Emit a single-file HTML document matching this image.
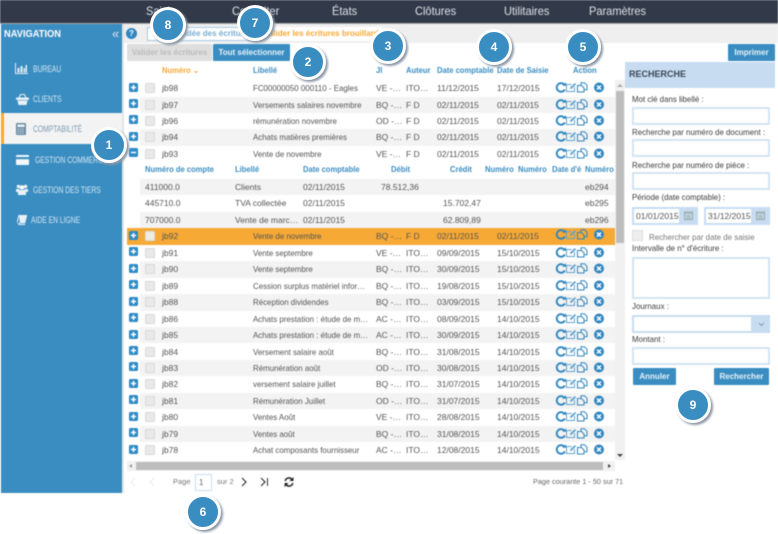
<!DOCTYPE html>
<html lang="fr"><head><meta charset="utf-8"><title>Comptabilité</title>
<style>
*{box-sizing:border-box}
html,body{margin:0;padding:0;background:#fff}
body{width:778px;height:534px;position:relative;overflow:hidden;font-family:"Liberation Sans",sans-serif;font-size:8.5px;color:#555}
.a,.r span,.r svg,.c{position:absolute;white-space:nowrap}
#w{position:absolute;left:0;top:0;width:778px;height:534px;filter:blur(.4px)}
.n{top:4px;color:#dfe3e8;font-size:12px;line-height:14px;transform:scaleX(.92);transform-origin:0 50%}
.s{color:#d3e6f3;font-size:9px;line-height:11px;transform:scaleX(.75);transform-origin:0 50%}
.r{position:absolute;left:127px;width:488px;height:16.45px;line-height:16px}
.g::before{content:"";position:absolute;left:13px;right:0;top:0;bottom:0;background:#f3f3f3}
.o{background:#f6a935;color:#555}
.r span{top:0}
.i{left:35px}.l{left:126px;transform:scaleX(.93);transform-origin:0 50%}.j{left:249px}.u{left:279px}.d{left:310px}.e{left:370px}
.cb{left:18px;top:3px!important;width:10px;height:10px;background:#e9e9e9;border:1px solid #d9d9d9;border-radius:1px}
.o .cb{background:#f0ede6}
.h{position:absolute;line-height:12px;color:#3a8dc1;font-weight:bold;font-size:8px;transform:scaleX(.95);transform-origin:0 50%}
.b{position:absolute;height:17px;line-height:17px;text-align:center;background:#3a8dc1;color:#e8f2f8;border-radius:1px;font-size:8px;font-weight:bold}
.lb{position:absolute;left:632px;font-size:8.5px;line-height:11px;color:#3d3d3d;transform:scaleX(.93);transform-origin:0 50%}
.in{position:absolute;background:#fff;border:2px solid #d3e4f4;height:18px}
.c{width:36px;height:36px;border-radius:50%;background:#3a8dc1;border:3px solid #fff;box-shadow:2px 2px 2px #8c98a6;color:#fff;font-weight:bold;font-size:12px;line-height:30px;text-align:center;z-index:5}
.m{transform:translate(-18px,-18px)}
.f{font-size:7.5px;line-height:12px;color:#777}
</style></head><body>
<svg width="0" height="0" style="position:absolute"><defs>
<symbol id="pl" viewBox="0 0 9 9"><rect width="9" height="9" rx="1.5" fill="#2f8ac6"/><path d="M2 4.5h5M4.5 2v5" stroke="#fff" stroke-width="1.5"/></symbol>
<symbol id="mi" viewBox="0 0 9 9"><rect width="9" height="9" rx="1.5" fill="#2f8ac6"/><path d="M2 4.5h5" stroke="#fff" stroke-width="1.5"/></symbol>
<symbol id="ac" viewBox="0 0 52 11"><g fill="none" stroke="#2f86c0"><path d="M9.500 2.900A4.300 4.300 0 1 0 9.800 7.500" stroke-width="1.900"/><path d="M7.200 3.800h3.800V.2z" fill="#2f86c0" stroke="none"/><path d="M19.500 5v4.500h-8V2.500H16.500" stroke-width="1" stroke="#5fa3d1"/><path d="M15 7l.3-1.800L19.800 1l1.300 1.300-4.500 4.500z" fill="#5fa3d1" stroke="none"/><path d="M22.500 3.500h4l2.500 2.500v4h-6.500z" stroke-width="1"/><path d="M26 3V.8h3.500l2.500 2.500v4.500h-3" stroke-width="1"/></g><circle cx="44" cy="5.500" r="5" fill="#2f86c0"/><path d="M42 3.500l4 4M46 3.500l-4 4" stroke="#fff" stroke-width="1.500"/></symbol>
</defs></svg>
<div id="w">
<div class="a" style="left:0;top:0;width:778px;height:23px;background:#323a49"></div>
<div class="a" style="left:0;top:23px;width:778px;height:1px;background:#aaa"></div>
<div class="a n" style="left:146px">Saisie</div>
<div class="a n" style="left:232px">Consulter</div>
<div class="a n" style="left:332px">États</div>
<div class="a n" style="left:415px">Clôtures</div>
<div class="a n" style="left:504px">Utilitaires</div>
<div class="a n" style="left:589px">Paramètres</div>

<div class="a" style="left:1px;top:24px;width:121px;height:469px;background:#3a8dc1"></div>
<div class="a" style="left:122px;top:24px;width:2px;height:469px;background:#e4e4e4"></div>
<div class="a" style="left:4px;top:28px;color:#fff;font-weight:bold;font-size:10px;line-height:13px;transform:scaleX(.93);transform-origin:0 50%">NAVIGATION</div>
<div class="a" style="left:112px;top:27px;color:#dbe9f3;font-size:13px;line-height:13px">«</div>
<svg class="a" style="left:15px;top:63px" width="13" height="11" viewBox="0 0 13 11"><path d="M.5 0v10.500H13" fill="none" stroke="#e3eef6"/><path d="M2.500 5h2v4.500h-2zM5.500 3h2v6.500h-2zM8.500 5h1.500v4.500H8.500zM10.500 2H12v7.500h-1.500z" fill="#e3eef6"/></svg>
<div class="a s" style="left:33px;top:64px">BUREAU</div>
<svg class="a" style="left:16px;top:93px" width="13" height="12" viewBox="0 0 13 12"><path d="M3 5l1.500-3.500h4L10 5" fill="none" stroke="#e8f1f7"/><rect x="0" y="4.500" width="13" height="2.500" rx="1" fill="#e8f1f7"/><path d="M1.500 7.500h10L10.500 12h-8z" fill="#e8f1f7"/></svg>
<div class="a s" style="left:33px;top:94px">CLIENTS</div>
<div class="a" style="left:1px;top:113px;width:121px;height:31px;background:#f3f3f3"></div>
<div class="a" style="left:1px;top:113px;width:3px;height:31px;background:#f6a935"></div>
<svg class="a" style="left:16px;top:123px" width="10" height="12" viewBox="0 0 10 12"><rect width="10" height="12" rx="1" fill="#6d8ea6"/><rect x="1.500" y="1.500" width="7" height="2.500" fill="#f3f3f3"/><path d="M1.500 6h7M1.500 8h7M1.500 10h7" stroke="#f3f3f3" stroke-width=".8" stroke-dasharray="1.500 .8"/></svg>
<div class="a s" style="left:33px;top:124px;color:#7c9cb2">COMPTABILITÉ</div>
<svg class="a" style="left:16px;top:155px" width="13" height="10" viewBox="0 0 13 10"><rect width="13" height="10" rx="1" fill="#f3f7fa"/><rect y="2" width="13" height="2.200" fill="#3a8dc1"/></svg>
<div class="a s" style="left:35px;top:155px">GESTION COMMERCE</div>
<svg class="a" style="left:16px;top:184px" width="12" height="11" viewBox="0 0 12 11"><circle cx="2.500" cy="2.500" r="1.800" fill="#e8f1f7"/><circle cx="9.500" cy="2.500" r="1.800" fill="#e8f1f7"/><circle cx="6" cy="3.500" r="2.200" fill="#fff"/><path d="M0 5h3l1 1h4l1-1h3v3H10v3H2V8H0z" fill="#e8f1f7"/></svg>
<div class="a s" style="left:33px;top:185px">GESTION DES TIERS</div>
<svg class="a" style="left:17px;top:215px" width="10" height="10" viewBox="0 0 10 10"><path d="M2 0h8L8 8H2.500C1 8 1 10 2.500 10H8v-.8H3C2 9.200 2 8.800 3 8.800" fill="#e8f1f7" stroke="#e8f1f7" stroke-width=".5"/><path d="M0 8L2 0" stroke="#e8f1f7"/></svg>
<div class="a s" style="left:31px;top:215px">AIDE EN LIGNE</div>

<div class="a" style="left:124px;top:24px;width:654px;height:19px;background:#efefef"></div>
<div class="a" style="left:126px;top:27.500px;width:11px;height:11px;border-radius:50%;background:#2f86c0;color:#fff;font-size:8px;font-weight:bold;line-height:11px;text-align:center">?</div>
<div class="a" style="left:147px;top:27px;width:112px;height:14px;background:#fff;border:1px solid #a8cde6;color:#79aed2;line-height:12px;padding-left:25px;font-weight:bold;font-size:8px">Validée des écritures</div>
<div class="a" style="left:258px;top:27px;width:124px;height:14px;background:#fff;color:#f6a935;line-height:13px;font-weight:bold;font-size:8px;padding-left:6px">Valider les écritures brouillard</div>
<div class="b" style="left:127px;top:44px;width:85px;background:#dedede;color:#bcbcbc">Valider les écritures</div>
<div class="b" style="left:213px;top:44px;width:77px">Tout sélectionner</div>
<div class="b" style="left:728px;top:44px;width:47px">Imprimer</div>

<div class="h" style="left:162px;top:65px;color:#f6a935">Numéro ⌄</div>
<div class="h" style="left:253px;top:65px">Libellé</div>
<div class="h" style="left:376px;top:65px">Jl</div>
<div class="h" style="left:406px;top:65px">Auteur</div>
<div class="h" style="left:437px;top:65px">Date comptable</div>
<div class="h" style="left:497px;top:65px">Date de Saisie</div>
<div class="h" style="left:573px;top:65px">Action</div>

<div class="r" style="top:80px"><svg style="left:2px;top:2.500px" width="9" height="9"><use href="#pl"/></svg><span class="cb"></span><span class="i">jb98</span><span class="l">FC00000050 000110 - Eagles</span><span class="j">VE -…</span><span class="u">ITO…</span><span class="d">11/12/2015</span><span class="e">17/12/2015</span><svg style="left:428px;top:2px" width="52" height="11"><use href="#ac"/></svg></div>
<div class="r g" style="top:96.500px"><svg style="left:2px;top:2.500px" width="9" height="9"><use href="#pl"/></svg><span class="cb"></span><span class="i">jb97</span><span class="l">Versements salaires novembre</span><span class="j">BQ -…</span><span class="u">F D</span><span class="d">02/11/2015</span><span class="e">02/11/2015</span><svg style="left:428px;top:2px" width="52" height="11"><use href="#ac"/></svg></div>
<div class="r" style="top:112.900px"><svg style="left:2px;top:2.500px" width="9" height="9"><use href="#pl"/></svg><span class="cb"></span><span class="i">jb96</span><span class="l">rémunération novembre</span><span class="j">OD -…</span><span class="u">F D</span><span class="d">02/11/2015</span><span class="e">02/11/2015</span><svg style="left:428px;top:2px" width="52" height="11"><use href="#ac"/></svg></div>
<div class="r g" style="top:129.400px"><svg style="left:2px;top:2.500px" width="9" height="9"><use href="#pl"/></svg><span class="cb"></span><span class="i">jb94</span><span class="l">Achats matières premières</span><span class="j">BQ -…</span><span class="u">F D</span><span class="d">02/11/2015</span><span class="e">02/11/2015</span><svg style="left:428px;top:2px" width="52" height="11"><use href="#ac"/></svg></div>
<div class="r" style="top:145.800px"><svg style="left:2px;top:2.500px" width="9" height="9"><use href="#mi"/></svg><span class="cb"></span><span class="i">jb93</span><span class="l">Vente de novembre</span><span class="j">VE -…</span><span class="u">F D</span><span class="d">02/11/2015</span><span class="e">02/11/2015</span><svg style="left:428px;top:2px" width="52" height="11"><use href="#ac"/></svg></div>

<div class="h" style="left:145px;top:164px">Numéro de compte</div>
<div class="h" style="left:235px;top:164px">Libellé</div>
<div class="h" style="left:303px;top:164px">Date comptable</div>
<div class="h" style="left:391px;top:164px">Débit</div>
<div class="h" style="left:450px;top:164px">Crédit</div>
<div class="h" style="left:485px;top:164px">Numéro</div>
<div class="h" style="left:518px;top:164px">Numéro</div>
<div class="h" style="left:552px;top:164px">Date d'é</div>
<div class="h" style="left:585px;top:164px">Numéro</div>

<div class="r g" style="top:179px"><span style="left:18px">411000.0</span><span style="left:108px">Clients</span><span style="left:176px">02/11/2015</span><span style="left:254px">78.512,36</span><span style="left:458px">eb294</span></div>
<div class="r" style="top:195.400px"><span style="left:18px">445710.0</span><span style="left:108px">TVA collectée</span><span style="left:176px">02/11/2015</span><span style="left:316px">15.702,47</span><span style="left:458px">eb295</span></div>
<div class="r g" style="top:211.900px"><span style="left:18px">707000.0</span><span style="left:108px">Vente de marc…</span><span style="left:176px">02/11/2015</span><span style="left:316px">62.809,89</span><span style="left:458px">eb296</span></div>

<div class="r o" style="top:228.300px"><svg style="left:2px;top:2.500px" width="9" height="9"><use href="#pl"/></svg><span class="cb"></span><span class="i">jb92</span><span class="l">Vente de novembre</span><span class="j">BQ -…</span><span class="u">F D</span><span class="d">02/11/2015</span><span class="e">02/11/2015</span><svg style="left:428px;top:1px" width="52" height="11"><use href="#ac"/></svg></div>
<div class="r" style="top:244.800px"><svg style="left:2px;top:2.500px" width="9" height="9"><use href="#pl"/></svg><span class="cb"></span><span class="i">jb91</span><span class="l">Vente septembre</span><span class="j">VE -…</span><span class="u">ITO…</span><span class="d">09/09/2015</span><span class="e">15/10/2015</span><svg style="left:428px;top:2px" width="52" height="11"><use href="#ac"/></svg></div>
<div class="r g" style="top:261.200px"><svg style="left:2px;top:2.500px" width="9" height="9"><use href="#pl"/></svg><span class="cb"></span><span class="i">jb90</span><span class="l">Vente septembre</span><span class="j">BQ -…</span><span class="u">ITO…</span><span class="d">30/09/2015</span><span class="e">15/10/2015</span><svg style="left:428px;top:2px" width="52" height="11"><use href="#ac"/></svg></div>
<div class="r" style="top:277.700px"><svg style="left:2px;top:2.500px" width="9" height="9"><use href="#pl"/></svg><span class="cb"></span><span class="i">jb89</span><span class="l">Cession surplus matériel infor…</span><span class="j">BQ -…</span><span class="u">ITO…</span><span class="d">19/08/2015</span><span class="e">15/10/2015</span><svg style="left:428px;top:2px" width="52" height="11"><use href="#ac"/></svg></div>
<div class="r g" style="top:294.100px"><svg style="left:2px;top:2.500px" width="9" height="9"><use href="#pl"/></svg><span class="cb"></span><span class="i">jb88</span><span class="l">Réception dividendes</span><span class="j">BQ -…</span><span class="u">ITO…</span><span class="d">03/09/2015</span><span class="e">15/10/2015</span><svg style="left:428px;top:2px" width="52" height="11"><use href="#ac"/></svg></div>
<div class="r" style="top:310.600px"><svg style="left:2px;top:2.500px" width="9" height="9"><use href="#pl"/></svg><span class="cb"></span><span class="i">jb86</span><span class="l">Achats prestation : étude de m…</span><span class="j">AC -…</span><span class="u">ITO…</span><span class="d">08/09/2015</span><span class="e">14/10/2015</span><svg style="left:428px;top:2px" width="52" height="11"><use href="#ac"/></svg></div>
<div class="r g" style="top:327px"><svg style="left:2px;top:2.500px" width="9" height="9"><use href="#pl"/></svg><span class="cb"></span><span class="i">jb85</span><span class="l">Achats prestation : étude de m…</span><span class="j">AC -…</span><span class="u">ITO…</span><span class="d">30/09/2015</span><span class="e">14/10/2015</span><svg style="left:428px;top:2px" width="52" height="11"><use href="#ac"/></svg></div>
<div class="r" style="top:343.500px"><svg style="left:2px;top:2.500px" width="9" height="9"><use href="#pl"/></svg><span class="cb"></span><span class="i">jb84</span><span class="l">Versement salaire août</span><span class="j">BQ -…</span><span class="u">ITO…</span><span class="d">31/08/2015</span><span class="e">14/10/2015</span><svg style="left:428px;top:2px" width="52" height="11"><use href="#ac"/></svg></div>
<div class="r g" style="top:359.900px"><svg style="left:2px;top:2.500px" width="9" height="9"><use href="#pl"/></svg><span class="cb"></span><span class="i">jb83</span><span class="l">Rémunération août</span><span class="j">OD -…</span><span class="u">ITO…</span><span class="d">30/08/2015</span><span class="e">14/10/2015</span><svg style="left:428px;top:2px" width="52" height="11"><use href="#ac"/></svg></div>
<div class="r" style="top:376.400px"><svg style="left:2px;top:2.500px" width="9" height="9"><use href="#pl"/></svg><span class="cb"></span><span class="i">jb82</span><span class="l">versement salaire juillet</span><span class="j">BQ -…</span><span class="u">ITO…</span><span class="d">31/07/2015</span><span class="e">14/10/2015</span><svg style="left:428px;top:2px" width="52" height="11"><use href="#ac"/></svg></div>
<div class="r g" style="top:392.800px"><svg style="left:2px;top:2.500px" width="9" height="9"><use href="#pl"/></svg><span class="cb"></span><span class="i">jb81</span><span class="l">Rémunération Juillet</span><span class="j">OD -…</span><span class="u">ITO…</span><span class="d">31/07/2015</span><span class="e">14/10/2015</span><svg style="left:428px;top:2px" width="52" height="11"><use href="#ac"/></svg></div>
<div class="r" style="top:409.300px"><svg style="left:2px;top:2.500px" width="9" height="9"><use href="#pl"/></svg><span class="cb"></span><span class="i">jb80</span><span class="l">Ventes Août</span><span class="j">VE -…</span><span class="u">ITO…</span><span class="d">28/08/2015</span><span class="e">14/10/2015</span><svg style="left:428px;top:2px" width="52" height="11"><use href="#ac"/></svg></div>
<div class="r g" style="top:425.700px"><svg style="left:2px;top:2.500px" width="9" height="9"><use href="#pl"/></svg><span class="cb"></span><span class="i">jb79</span><span class="l">Ventes août</span><span class="j">BQ -…</span><span class="u">ITO…</span><span class="d">31/08/2015</span><span class="e">14/10/2015</span><svg style="left:428px;top:2px" width="52" height="11"><use href="#ac"/></svg></div>
<div class="r" style="top:442.200px"><svg style="left:2px;top:2.500px" width="9" height="9"><use href="#pl"/></svg><span class="cb"></span><span class="i">jb78</span><span class="l">Achat composants fournisseur</span><span class="j">AC -…</span><span class="u">ITO…</span><span class="d">12/08/2015</span><span class="e">14/10/2015</span><svg style="left:428px;top:2px" width="52" height="11"><use href="#ac"/></svg></div>

<div class="a" style="left:615px;top:80px;width:10px;height:380px;background:#f1f1f1"></div>
<div class="a" style="left:616px;top:91px;width:8px;height:152px;background:#bdbdbd"></div>
<div class="a" style="left:617px;top:84px;border:3px solid transparent;border-bottom:3px solid #aaa;border-top:0"></div>
<div class="a" style="left:617px;top:454px;border:3px solid transparent;border-top:3px solid #444;border-bottom:0"></div>
<div class="a" style="left:127px;top:461px;width:488px;height:10px;background:#f1f1f1"></div>
<div class="a" style="left:136px;top:462px;width:467px;height:8px;background:#bdbdbd"></div>
<div class="a" style="left:129px;top:464px;border:2.500px solid transparent;border-right:3px solid #999;border-left:0"></div>
<div class="a" style="left:608px;top:464px;border:2.500px solid transparent;border-left:3px solid #444;border-right:0"></div>

<div class="a f" style="left:173px;top:476px">Page</div>
<div class="a" style="left:195px;top:474px;width:17px;height:17px;border:1px solid #c7dcf0;background:#fff;font-size:8px;line-height:15px;padding-left:3px;color:#666">1</div>
<div class="a f" style="left:217px;top:476px">sur 2</div>
<svg class="a" style="left:130px;top:477px" width="30" height="10" viewBox="0 0 30 10"><path d="M5 1L1 5l4 4M24 1l-4 4 4 4" fill="none" stroke="#eee" stroke-width="1.200"/></svg>
<svg class="a" style="left:240px;top:477px" width="30" height="10" viewBox="0 0 30 10"><path d="M2 1l4 4-4 4M21 1l4 4-4 4" fill="none" stroke="#333" stroke-width="1.200"/><path d="M27.500 1v8" stroke="#333"/></svg>
<svg class="a" style="left:284px;top:477px" width="10" height="10" viewBox="0 0 10 10"><path d="M1.200 4A3.800 3.800 0 0 1 8 2.500M8.800 6A3.800 3.800 0 0 1 2 7.500" fill="none" stroke="#222" stroke-width="1.500"/><path d="M9.500 0v4h-4zM.500 10V6h4z" fill="#222"/></svg>
<div class="a f" style="left:533px;top:476px;color:#666;transform:scaleX(.97);transform-origin:0 50%">Page courante 1 - 50 sur 71</div>

<div class="a" style="left:625px;top:62px;width:150px;height:26px;background:#c7dcf0;color:#3a4656;font-weight:bold;font-size:9px;line-height:25px;padding-left:4px">RECHERCHE</div>
<div class="lb" style="top:94px">Mot clé dans libellé :</div><div class="in" style="left:632px;top:107px;width:138px"></div>
<div class="lb" style="top:127px">Recherche par numéro de document :</div><div class="in" style="left:632px;top:139px;width:138px"></div>
<div class="lb" style="top:160px">Recherche par numéro de pièce :</div><div class="in" style="left:632px;top:172px;width:138px"></div>
<div class="lb" style="top:192px">Période (date comptable) :</div>
<div class="in" style="left:632px;top:207px;width:66px;padding-left:2px;line-height:15px;color:#555;border-width:2px 19px 2px 2px;border-color:#c7dcf0">01/01/2015</div>
<div class="in" style="left:704px;top:207px;width:66px;padding-left:2px;line-height:15px;color:#555;border-width:2px 19px 2px 2px;border-color:#c7dcf0">31/12/2015</div>
<svg class="a" style="left:684px;top:211px" width="9" height="9" viewBox="0 0 9 9"><rect x=".5" y="1" width="8" height="7.500" fill="none" stroke="#9aa"/><path d="M.5 2.500h8M2 5h5M2 7h5" stroke="#9aa"/></svg>
<svg class="a" style="left:756px;top:211px" width="9" height="9" viewBox="0 0 9 9"><rect x=".5" y="1" width="8" height="7.500" fill="none" stroke="#9aa"/><path d="M.5 2.500h8M2 5h5M2 7h5" stroke="#9aa"/></svg>
<div class="a" style="left:632px;top:230px;width:11px;height:11px;background:#eee;border:1px solid #ddd"></div>
<div class="a" style="left:649px;top:232px;font-size:8.500px;line-height:11px;color:#777;transform:scaleX(.93);transform-origin:0 50%">Rechercher par date de saisie</div>
<div class="lb" style="top:243px">Intervalle de n° d'écriture :</div>
<div class="in" style="left:632px;top:257px;width:138px;height:42px"></div>
<div class="lb" style="top:301px">Journaux :</div>
<div class="in" style="left:632px;top:315px;width:138px;border-right-width:19px;border-color:#c7dcf0"></div>
<svg class="a" style="left:758px;top:322px" width="7" height="5" viewBox="0 0 7 5"><path d="M1 1l2.500 2.500L6 1" fill="none" stroke="#7f9fb8"/></svg>
<div class="lb" style="top:334px">Montant :</div>
<div class="in" style="left:632px;top:347px;width:138px"></div>
<div class="b" style="left:633px;top:368px;width:43px">Annuler</div>
<div class="b" style="left:714px;top:368px;width:55px">Rechercher</div>
</div>
<div class="c m" style="left:109px;top:145px">1</div>
<div class="c m" style="left:308px;top:62px">2</div>
<div class="c m" style="left:388px;top:46px">3</div>
<div class="c m" style="left:494px;top:47px">4</div>
<div class="c m" style="left:583px;top:47px">5</div>
<div class="c m" style="left:203px;top:512px">6</div>
<div class="c m" style="left:255px;top:23px">7</div>
<div class="c m" style="left:168px;top:25px">8</div>
<div class="c m" style="left:693px;top:405px">9</div>
</body></html>
